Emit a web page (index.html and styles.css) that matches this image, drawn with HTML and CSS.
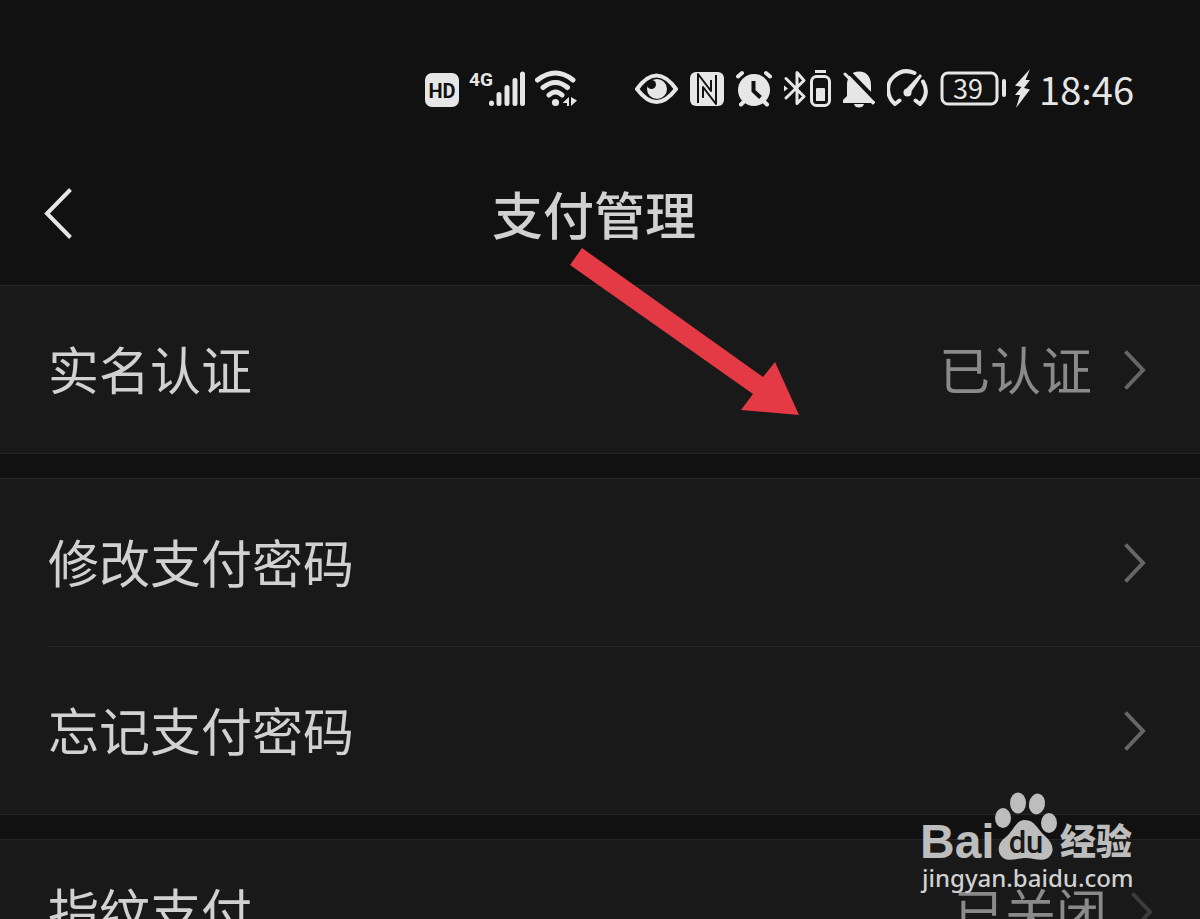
FILE: index.html
```
<!DOCTYPE html>
<html lang="zh-CN">
<head>
    <meta charset="UTF-8">
    <meta name="viewport" content="width=device-width, initial-scale=1.0">
    <title>支付管理</title>
    <link rel="stylesheet" href="styles.css">
</head>
<body>
    <!-- 状态栏 -->
    <div class="status-bar">
        <div class="status-group network">
            <svg width="34" height="40" viewBox="0 0 34 40">
                <rect x="0" y="4" width="34" height="34" rx="7"/>
                <text class="hd-text" x="17" y="29">HD</text>
            </svg>
            <svg width="56" height="40" viewBox="0 0 56 40">
                <text class="net-text" x="0" y="17">4G</text>
                <path class="bars" d="M22.500 34v.5M30 25.500v9M38 18.500V34.500M46 11.500v23M53.500 5v29.500"/>
            </svg>
            <svg width="42" height="40" viewBox="0 0 42 40">
                <path class="arc wifi" d="M2.500 11Q20.500-3 38 11M8 18.500Q20.500 8.500 32.500 18.500M14 26Q20.500 20 27 26"/>
                <circle cx="20.500" cy="33.500" r="3.600"/>
                <path d="M34 28v9h-2v-3h-4.500zM36 28v9l6-5.500z"/>
            </svg>
        </div>
        <div class="status-group">
            <svg width="43" height="40" viewBox="0 0 43 40">
                <path class="arc" d="M2 20Q21.500-7 41 20Q21.500 46 2 20z"/>
                <circle cx="22" cy="20" r="10"/>
                <circle class="cut" cx="16.500" cy="15.500" r="4.500"/>
            </svg>
            <svg width="34" height="40" viewBox="0 0 34 40">
                <rect x="0" y="3" width="34" height="34" rx="6"/>
                <path class="cut-line nfc" d="M8 34V5L21 22V11M26 6V35L13 18V29"/>
            </svg>
            <svg width="36" height="40" viewBox="0 0 36 40">
                <circle cx="18" cy="21" r="16"/>
                <path class="arc" d="M2 7.500L6 4M34 7.500L30 4M5 35.500l3-3M31 35.500l-3-3"/>
                <path class="cut-line" d="M17.500 12v10l7 6.500"/>
            </svg>
            <svg width="47" height="40" viewBox="0 0 47 40">
                <path class="bluetooth" d="M2 9.500L20 27.500L13 34.500V3.500L20 11.500L2 29"/>
                <path d="M0 16.500l4 3-4 3z"/>
                <rect class="line" x="27.500" y="7.500" width="18" height="29" rx="5"/>
                <path d="M31 1h11v3H31zM32 20q0-1 1-1h7q1 0 1 1v12h-9z"/>
            </svg>
            <svg width="32" height="40" viewBox="0 0 32 40">
                <path d="M0 34v-3l4-4V16Q4 3 16 2.500Q28 3 28 17v10l4 4v3zM11 35h10q-1 3.500-5 3.500T11 35z"/>
                <path class="cut-line" d="M3 0L33 31"/>
                <path class="line" d="M2 5L30 34"/>
            </svg>
            <svg width="41" height="40" viewBox="0 0 41 40">
                <path class="arc" d="M12.500 31.500L8 35C-1 27-1 14 7 7.500Q16-1 27.500 4M36 12.500Q43 25 33 35L28.500 31.500"/>
                <path d="M33 5l2 2-11 16-5-3z"/>
                <circle cx="20.500" cy="23.500" r="4"/>
            </svg>
            <svg width="67" height="40" viewBox="0 0 67 40">
                <rect class="line" x="2" y="4" width="55" height="31" rx="6"/>
                <text class="battery-text" x="28" y="30">39</text>
                <path class="arc" d="M64 12v14"/>
            </svg>
        </div>
        <svg class="bolt" width="16" height="40" viewBox="0 0 16 40">
            <path d="M15 0L0 16.500l6.500 1.500L0 26h5L1 39 15 20.500 9 19l6-8h-4.500z"/>
        </svg>
        <time class="clock">18:46</time>
    </div>

    <!-- 标题栏 -->
    <header class="header">
        <button class="back-btn" aria-label="返回">
            <svg width="28" height="52" viewBox="0 0 28 52">
                <path d="M26.500 2.500L3 26.500l23.500 24"/>
            </svg>
        </button>
        <h1>支付管理</h1>
    </header>

    <!-- 设置列表 -->
    <main class="settings">
        <section class="group">
            <a class="row" href="#verify">
                <span class="label">实名认证</span>
                <span class="value">已认证</span>
                <svg class="chevron" viewBox="0 0 22 40"><path d="M1.500 1.500L19 20 1.500 38.500"/></svg>
            </a>
        </section>
        <section class="group">
            <a class="row" href="#change">
                <span class="label">修改支付密码</span>
                <svg class="chevron" viewBox="0 0 22 40"><path d="M1.500 1.500L19 20 1.500 38.500"/></svg>
            </a>
            <a class="row" href="#forgot">
                <span class="label">忘记支付密码</span>
                <svg class="chevron" viewBox="0 0 22 40"><path d="M1.500 1.500L19 20 1.500 38.500"/></svg>
            </a>
        </section>
        <section class="group">
            <a class="row compact" href="#fingerprint">
                <span class="label">指纹支付</span>
                <span class="value">已关闭</span>
                <svg class="chevron" viewBox="0 0 22 40"><path d="M1.500 1.500L19 20 1.500 38.500"/></svg>
            </a>
        </section>
    </main>

    <!-- 箭头标注 -->
    <svg class="pointer" width="230" height="168" viewBox="0 0 230 168">
        <path d="M12 0L193 129l12-15 24 53-58-5 12-16L0 17z"/>
    </svg>

    <!-- 水印 -->
    <svg class="watermark" width="220" height="104" viewBox="0 0 220 104">
        <text class="wm-bai" x="0" y="66">Bai</text>
        <ellipse cx="83" cy="26" rx="8" ry="10"/>
        <ellipse cx="98" cy="11" rx="8" ry="10.500"/>
        <ellipse cx="117" cy="12" rx="8" ry="10.500" transform="rotate(10 117 12)"/>
        <ellipse cx="129" cy="31" rx="8" ry="10"/>
        <path d="M105 28C115 28 117 37 125 44C134 52 135 60 128 66C121 70 114 66 106 66C97 66 90 70 83 66C76 60 78 50 86 45C94 38 96 28 105 28z"/>
        <text class="wm-du" x="106" y="61">du</text>
        <text class="wm-cn" x="140" y="63">经验</text>
        <text class="wm-url" x="2" y="95">jingyan.baidu.com</text>
    </svg>
</body>
</html>
```
FILE: styles.css
```
body {
    position: relative;
    height: 100vh;
    margin: 0;
    overflow: hidden;
    background-color: #111;
    color: #d1d1d1;
    font-family: "Noto Sans CJK SC", sans-serif;
}
/* 状态栏 */
.status-bar {
    display: flex;
    justify-content: flex-end;
    align-items: center;
    height: 40px;
    padding: 69px 66px 34px 0;
    color: #e6e6e6;
    fill: #e6e6e6;
}
.status-group {
    display: flex;
    gap: 12px;
}
.network {
    gap: 10px;
    margin-right: 58px;
}
.bolt {
    margin: 0 8px;
}
.clock {
    font-size: 38px;
    line-height: 40px;
}
.bars, .arc, .line, .bluetooth {
    fill: none;
    stroke: #e6e6e6;
    stroke-width: 4px;
    stroke-linecap: round;
    stroke-linejoin: round;
}
.bars, .wifi {
    stroke-width: 5px;
}
.line, .bluetooth {
    stroke-width: 3px;
}
.cut {
    fill: #111;
}
.cut-line {
    fill: none;
    stroke: #111;
    stroke-width: 4px;
}
.nfc {
    stroke-width: 2px;
    stroke-linejoin: round;
}
.hd-text {
    fill: #111;
    font: bold 20px Roboto, sans-serif;
    text-anchor: middle;
}
.net-text {
    font: bold 19px "Liberation Sans Narrow", Roboto, sans-serif;
}
.battery-text {
    font-size: 27px;
    text-anchor: middle;
}
/* 标题栏 */
.header {
    display: flex;
    align-items: center;
    height: 140px;
    padding: 0 84px 2px 44px;
}
.back-btn {
    display: flex;
    padding: 0;
    border: none;
    background: none;
    cursor: pointer;
}
.back-btn path {
    fill: none;
    stroke: #e6e6e6;
    stroke-width: 4px;
}
h1 {
    flex: 1;
    margin: 0;
    font-size: 51px;
    font-weight: 500;
    line-height: 72px;
    text-align: center;
}
/* 设置列表 */
.settings {
    display: flex;
    flex-direction: column;
    gap: 24px;
}
.group {
    border-top: 1px solid #262626;
    border-bottom: 1px solid #262626;
    background-color: #191919;
}
.row {
    display: flex;
    align-items: center;
    height: 167px;
    margin-left: 48px;
    padding-right: 54px;
    color: #d1d1d1;
    font-size: 51px;
    line-height: 72px;
    text-decoration: none;
}
.row + .row {
    border-top: 1px solid #262626;
}
.label, .value {
    padding-bottom: 4px;
}
.value {
    margin-left: auto;
    color: #8a8a8a;
}
.chevron {
    width: 22px;
    height: 40px;
    margin-left: auto;
    fill: none;
    stroke: #666;
    stroke-width: 4px;
}
.value + .chevron {
    margin-left: 32px;
}
.compact {
    height: 143px;
    padding-right: 47px;
}
.compact .value + .chevron {
    margin-left: 24px;
    stroke: #3c3c3c;
}
/* 标注和水印 */
.pointer {
    position: absolute;
    top: 248px;
    left: 570px;
    fill: #e43a45;
}
.watermark {
    position: absolute;
    right: 60px;
    bottom: 23px;
    fill: #bdbdbd;
}
.wm-bai {
    font: bold 48px "Liberation Sans", sans-serif;
}
.wm-du {
    fill: #191919;
    font: 500 31px Roboto, sans-serif;
    text-anchor: middle;
}
.wm-cn {
    font-size: 36px;
    font-weight: 900;
}
.wm-url {
    fill: #d1d1d1;
    font: 500 24px "Noto Sans", sans-serif;
}
```
